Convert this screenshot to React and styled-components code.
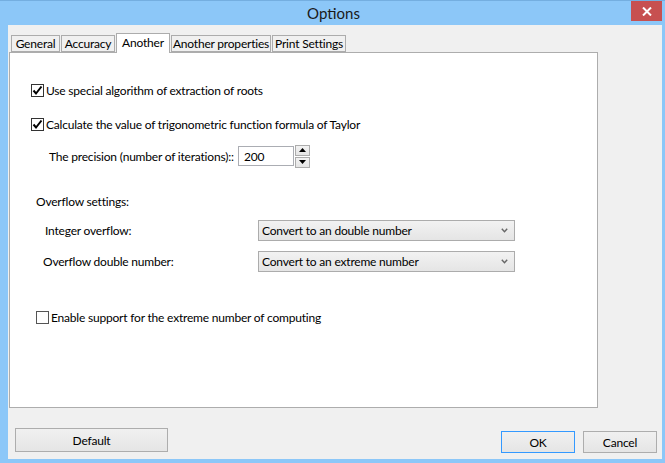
import styled, { createGlobalStyle } from "styled-components";

const GlobalStyle = createGlobalStyle`
  html, body {
    margin: 0;
    padding: 0;
    background: #8cc7f8;
  }
  body {
    font-family: "Segoe UI", Lato, "Noto Sans", sans-serif;
    font-size: 12px;
    letter-spacing: -0.2px;
    color: #000;
  }
`;

const FRAME = "#8cc7f8";

const Window = styled.div`
  width: 665px;
  height: 463px;
  display: flex;
  flex-direction: column;
  background: ${FRAME};
  box-sizing: border-box;
  border-top: 1px solid #74aee0;
`;

const TitleBar = styled.div`
  height: 24px;
  display: grid;
  grid-template-columns: 1fr auto 1fr;
  align-items: start;
`;

const Title = styled.div`
  grid-column: 2;
  font-size: 15px;
  letter-spacing: 0;
  line-height: 24px;
  color: #1a1a1a;
  padding-left: 2px;
`;

const CloseButton = styled.div`
  grid-column: 3;
  justify-self: end;
  width: 31px;
  height: 20px;
  margin-right: 3px;
  background: #c75050;
  display: flex;
  align-items: center;
  justify-content: center;
`;

const Client = styled.div`
  flex: 1;
  display: flex;
  flex-direction: column;
  background: #f0f0f0;
  margin: 0 3px 4px 8px;
  padding: 8px 0 0 1px;
`;

const TabStrip = styled.div`
  display: flex;
  align-items: flex-end;
  padding-left: 2px;
  height: 19px;
  position: relative;
  z-index: 1;
`;

const Tab = styled.div`
  box-sizing: border-box;
  width: ${(p) => p.$w}px;
  height: ${(p) => (p.$active ? 20 : 17)}px;
  margin-right: 1px;
  margin-bottom: ${(p) => (p.$active ? -1 : 0)}px;
  border: 1px solid #acacac;
  border-bottom: ${(p) => (p.$active ? "none" : "1px solid #acacac")};
  background: ${(p) => (p.$active ? "#fff" : "#f0f0f0")};
  display: flex;
  justify-content: center;
  align-items: ${(p) => (p.$active ? "flex-start" : "center")};
  padding-top: ${(p) => (p.$active ? 1 : 0)}px;
  line-height: 15px;
  white-space: nowrap;
  color: #000;
`;

const Panel = styled.div`
  box-sizing: border-box;
  width: 589px;
  height: 356px;
  background: #fff;
  border: 1px solid #adadad;
  display: flex;
  flex-direction: column;
`;

const Row = styled.div`
  display: flex;
  align-items: center;
  height: ${(p) => p.$h || 14}px;
  margin-top: ${(p) => p.$top}px;
  padding-left: ${(p) => p.$left}px;
`;

const Box = styled.span`
  box-sizing: border-box;
  width: 13px;
  height: 13px;
  border: 1px solid ${(p) => (p.$checked ? "#333" : "#555")};
  background: #fff;
  display: inline-flex;
  align-items: center;
  justify-content: center;
  margin-right: 2px;
`;

const Label = styled.span`
  width: ${(p) => (p.$w ? `${p.$w}px` : "auto")};
  flex-shrink: 0;
  white-space: nowrap;
`;

const NumberBox = styled.div`
  box-sizing: border-box;
  width: 56px;
  height: 20px;
  border: 1px solid #abadb3;
  padding-left: 5px;
  display: flex;
  align-items: center;
`;

const Spinner = styled.div`
  display: flex;
  flex-direction: column;
  margin-left: 1px;
  gap: 1px;
`;

const SpinButton = styled.div`
  box-sizing: border-box;
  width: 15px;
  height: 11px;
  border: 1px solid #acacac;
  background: linear-gradient(#f2f2f2, #e5e5e5);
  display: flex;
  align-items: center;
  justify-content: center;
`;

const Select = styled.div`
  box-sizing: border-box;
  width: 257px;
  height: 21px;
  border: 1px solid #acacac;
  background: linear-gradient(#f2f2f2, #e5e5e5);
  display: flex;
  align-items: center;
  justify-content: space-between;
  padding: 0 6px 0 3px;
`;

const Footer = styled.div`
  flex: 1;
  display: flex;
  justify-content: space-between;
  align-items: flex-end;
  padding: 0 5px 0 6px;
`;

const Actions = styled.div`
  display: flex;
  gap: 8px;
  margin-bottom: 6px;
`;

const Button = styled.div`
  box-sizing: border-box;
  width: ${(p) => p.$w}px;
  height: ${(p) => p.$h}px;
  margin-bottom: ${(p) => p.$mb || 0}px;
  border: 1px solid ${(p) => (p.$focus ? "#3399ff" : "#adadad")};
  background: linear-gradient(#f0f0f0, #e5e5e5);
  display: flex;
  align-items: center;
  justify-content: center;
`;

const Check = () => (
  <svg width="11" height="11" viewBox="0 0 11 11">
    <path d="M1.5 5.5 L4 8.5 L9.5 1.5" fill="none" stroke="#000" strokeWidth="2" />
  </svg>
);

const Checkbox = ({ checked }) => <Box $checked={checked}>{checked && <Check />}</Box>;

const Arrow = ({ up }) => (
  <svg width="7" height="4" viewBox="0 0 7 4">
    <path d={up ? "M0 4 L3.5 0 L7 4 Z" : "M0 0 L7 0 L3.5 4 Z"} fill="#000" />
  </svg>
);

const Chevron = () => (
  <svg width="7" height="5" viewBox="0 0 7 5">
    <path d="M0.8 0.8 L3.5 3.8 L6.2 0.8" fill="none" stroke="#666" strokeWidth="1.4" />
  </svg>
);

const tabs = [
  { name: "General", w: 49 },
  { name: "Accuracy", w: 54 },
  { name: "Another", w: 54, active: true },
  { name: "Another properties", w: 100 },
  { name: "Print Settings", w: 74 },
];

export default function App() {
  return (
    <>
      <GlobalStyle />
      <Window>
        <TitleBar>
          <Title>Options</Title>
          <CloseButton>
            <svg width="10" height="9" viewBox="0 0 10 9">
              <path d="M1 0.5 L9 8.5 M9 0.5 L1 8.5" stroke="#fff" strokeWidth="2" />
            </svg>
          </CloseButton>
        </TitleBar>
        <Client>
          <TabStrip>
            {tabs.map((t) => (
              <Tab key={t.name} $w={t.w} $active={t.active}>
                {t.name}
              </Tab>
            ))}
          </TabStrip>
          <Panel>
            <Row $top={30} $left={21} $h={15}>
              <Checkbox checked />
              <Label>Use special algorithm of extraction of roots</Label>
            </Row>
            <Row $top={19} $left={21} $h={15}>
              <Checkbox checked />
              <Label>Calculate the value of trigonometric function formula of Taylor</Label>
            </Row>
            <Row $top={13} $left={39} $h={22}>
              <Label $w={189}>The precision (number of iterations)::</Label>
              <NumberBox>200</NumberBox>
              <Spinner>
                <SpinButton>
                  <Arrow up />
                </SpinButton>
                <SpinButton>
                  <Arrow />
                </SpinButton>
              </Spinner>
            </Row>
            <Row $top={27} $left={26}>
              <Label>Overflow settings:</Label>
            </Row>
            <Row $top={12} $left={35} $h={21}>
              <Label $w={213}>Integer overflow:</Label>
              <Select>
                Convert to an double number
                <Chevron />
              </Select>
            </Row>
            <Row $top={10} $left={33} $h={21}>
              <Label $w={215}>Overflow double number:</Label>
              <Select>
                Convert to an extreme number
                <Chevron />
              </Select>
            </Row>
            <Row $top={38} $left={26} $h={15}>
              <Checkbox />
              <Label>Enable support for the extreme number of computing</Label>
            </Row>
          </Panel>
          <Footer>
            <Button $w={153} $h={24} $mb={7}>
              Default
            </Button>
            <Actions>
              <Button $w={74} $h={22} $focus>
                OK
              </Button>
              <Button $w={74} $h={22}>
                Cancel
              </Button>
            </Actions>
          </Footer>
        </Client>
      </Window>
    </>
  );
}
